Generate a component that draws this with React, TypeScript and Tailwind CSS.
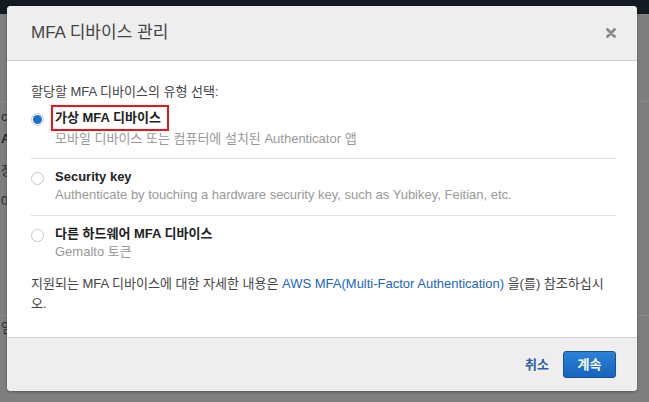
import { useState } from 'react'

const font = { fontFamily: "'Liberation Sans', 'Noto Sans CJK KR', sans-serif" }

const options = [
  { id: 'virtual', title: '가상 MFA 디바이스', desc: '모바일 디바이스 또는 컴퓨터에 설치된 Authenticator 앱' },
  { id: 'u2f', title: 'Security key', desc: 'Authenticate by touching a hardware security key, such as Yubikey, Feitian, etc.' },
  { id: 'hw', title: '다른 하드웨어 MFA 디바이스', desc: 'Gemalto 토큰' },
]

const Radio = ({ checked }: { checked: boolean }) => (
  <span className="mt-[4px] flex h-[13px] w-[13px] shrink-0 items-center justify-center rounded-full border border-[#c8c8c8] bg-white">
    {checked && <span className="h-[9px] w-[9px] rounded-full bg-[#1a6fd0]" />}
  </span>
)

export default function App() {
  const [selected, setSelected] = useState('virtual')

  return (
    <div className="relative h-[402px] w-[649px] overflow-hidden bg-[#7f7f7f]" style={font}>
      {/* page behind the overlay */}
      <div className="h-[14px] bg-[#141a22]" />
      <div className="flex flex-col pl-[1px] text-[13px] leading-[16px] text-[#2a2a2a]">
        <div className="h-[88px] border-b border-[#8c8c8c]" />
        <div className="mt-[7px]">c</div>
        <div className="mt-[6px] font-bold">A</div>
        <div className="mt-[16px]">장</div>
        <div className="mt-[14px] text-[#2a2a4a]">0</div>
        <div className="mt-[106px] border-t border-[#8c8c8c] pt-[4px]">임</div>
      </div>

      {/* modal */}
      <div className="absolute left-[7px] top-[6px] flex w-[630px] flex-col overflow-hidden rounded-[4px] bg-white shadow-[0_1px_3px_rgba(0,0,0,0.35)]">
        <div className="flex h-[55px] items-center justify-between border-b border-[#cfcfcf] bg-[#eeeeee] pl-[24px] pr-[21px]">
          <h2 className="text-[17px] text-[#444]">MFA 디바이스 관리</h2>
          <svg width="10" height="10" viewBox="0 0 10 10">
            <path d="M1.5 1.5 L8.5 8.5 M8.5 1.5 L1.5 8.5" stroke="#888" strokeWidth="2.8" strokeLinecap="round" />
          </svg>
        </div>

        <div className="flex h-[276px] flex-col pl-[24px] pr-[21px] pt-[22px] text-[13px] leading-[18px]">
          <p className="text-[#444]">할당할 MFA 디바이스의 유형 선택:</p>
          <div className="mt-[8px] flex flex-col">
            {options.map((o, i) => (
              <label
                key={o.id}
                onClick={() => setSelected(o.id)}
                className={`flex cursor-pointer gap-[11px] ${i > 0 ? 'border-t border-[#dedede] pt-[9px]' : ''} ${i === 0 ? 'pb-[10px]' : i === 1 ? 'pb-[11px]' : ''}`}
              >
                <Radio checked={selected === o.id} />
                <div className="flex flex-col">
                  <span
                    className={`w-fit font-bold text-[#222] ${i === 0 ? '-my-[4px] -ml-[4px] -mr-[8px] border-2 border-[#e8141b] py-[2px] pl-[2px] pr-[6px]' : ''}`}
                  >
                    {o.title}
                  </span>
                  <span className={`${i === 0 ? 'mt-[3px]' : ''} text-[#999]`}>{o.desc}</span>
                </div>
              </label>
            ))}
          </div>
          <p className="mt-[13px] leading-[20px] text-[#444]">
            지원되는 MFA 디바이스에 대한 자세한 내용은{' '}
            <a className="text-[#1a66c4]">AWS MFA(Multi-Factor Authentication)</a> 을(를) 참조하십시
            <br />
            오.
          </p>
        </div>

        <div className="flex h-[54px] items-center justify-end gap-[14px] border-t border-[#d0d0d0] bg-[#eeeeee] pr-[21px]">
          <button className="text-[13px] font-bold text-[#2f5fa8]">취소</button>
          <button className="h-[27px] w-[53px] rounded-[3px] border border-[#1a5296] bg-gradient-to-b from-[#2b82d9] to-[#1563bd] text-[13px] font-bold text-white">
            계속
          </button>
        </div>
      </div>
    </div>
  )
}
